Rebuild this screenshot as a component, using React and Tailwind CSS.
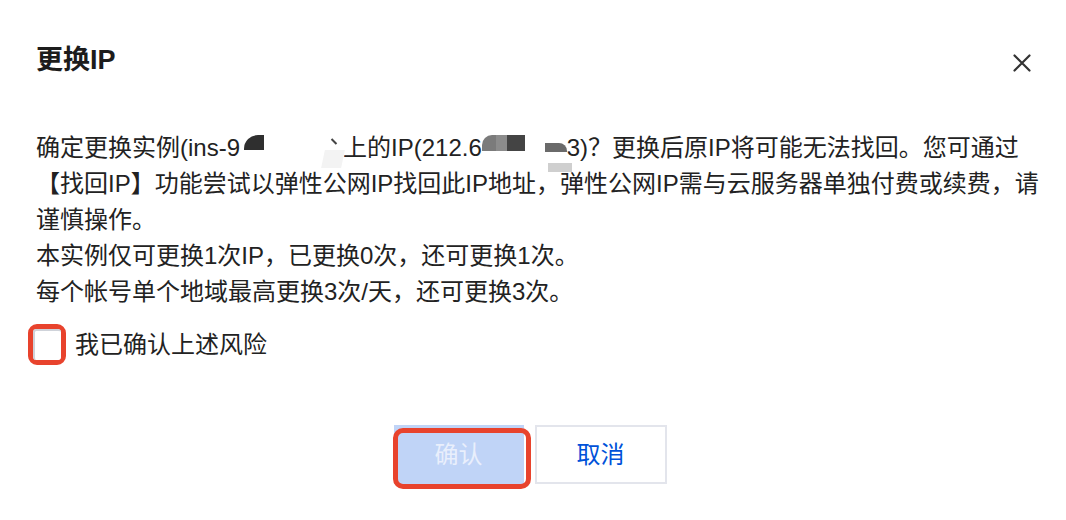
import { useState } from "react";

const font = {
  fontFamily: '"Liberation Sans", "Noto Sans CJK SC", sans-serif',
};

// redacted bits of the instance id / ip in the original screenshot
function Blot({ className }) {
  return <span className={`inline-block align-top ${className}`} />;
}

export default function App() {
  const [agreed, setAgreed] = useState(false);

  return (
    <div
      className="w-[1066px] h-[520px] bg-white flex flex-col pt-10 pl-[36px] pr-[35px] text-[#222]"
      style={font}
    >
      {/* HEADER */}
      <div className="flex items-center justify-between h-[40px]">
        <h1 className="text-[27px] font-bold leading-[40px] text-[#1c1c1c]">更换IP</h1>
        <button className="mt-[6px] w-[18px] h-[18px] flex items-center justify-center">
          <svg width="18" height="18" viewBox="0 0 18 18" fill="none">
            <path d="M1.5 1.5 16.5 16.5M16.5 1.5 1.5 16.5" stroke="#333" strokeWidth="2.2" strokeLinecap="round" />
          </svg>
        </button>
      </div>

      {/* BODY */}
      <div className="mt-[50px] text-[24px] leading-[36px] whitespace-nowrap">
        <div>
          确定更换实例(ins-9
          <Blot className="ml-[4px] w-[20px] h-[15px] mt-[5px] bg-[#2f2f2f] rounded-tl-[14px]" />
          <span className="inline-block w-[65px]" />
          <span className="relative inline-block w-[14px] h-[36px] align-top">
            <span className="absolute left-[-6px] top-[20px] w-[20px] h-[18px] bg-[#f3f3f3] -skew-x-12" />
            <span className="absolute left-[4px] top-[8px] w-[2px] h-[7px] bg-[#444] -rotate-45" />
          </span>
          上的IP(212.6
          <Blot className="w-[14px] h-[16px] mt-[5px] bg-[#7b7b7b] rounded-tl-[10px]" />
          <Blot className="w-[11px] h-[16px] mt-[5px] bg-[#8c8c8c]" />
          <Blot className="w-[18px] h-[16px] mt-[5px] bg-[#444]" />
          <span className="inline-block w-[20px]" />
          <Blot className="w-[22px] h-[9px] mt-[13px] bg-[#6a6a6a] rounded-tr-[8px]" />
          3)？更换后原IP将可能无法找回。您可通过
        </div>
        <div className="relative">
          <span className="absolute left-[512px] top-[-3px] w-[24px] h-[9px] bg-[#cfcfcf]" />
          【找回IP】功能尝试以弹性公网IP找回此IP地址，弹性公网IP需与云服务器单独付费或续费，请
        </div>
        <div>谨慎操作。</div>
        <div>本实例仅可更换1次IP，已更换0次，还可更换1次。</div>
        <div>每个帐号单个地域最高更换3次/天，还可更换3次。</div>
      </div>

      {/* CHECKBOX */}
      <label className="mt-[14px] ml-[-8px] flex items-center h-[41px] cursor-pointer">
        <span className="w-[38px] h-[41px] border-[5px] border-[#e8432d] rounded-[9px] flex">
          <input
            type="checkbox"
            checked={agreed}
            onChange={(e) => setAgreed(e.target.checked)}
            className="sr-only"
          />
          <span className="flex-1 bg-white border-t-2 border-l-2 border-[#cfd3da] rounded-[3px]" />
        </span>
        <span className="ml-[9px] text-[24px] leading-[36px]">我已确认上述风险</span>
      </label>

      {/* BUTTONS */}
      <div className="mt-[60px] flex justify-center gap-[11px] mr-[7px]">
        <div className="relative">
          <button
            disabled={!agreed}
            className={`w-[130px] h-[59px] text-[24px] ${
              agreed ? "bg-[#0052d9] text-white" : "bg-[#c0d4f7] text-[#e9effc] cursor-not-allowed"
            }`}
          >
            确认
          </button>
          <span className="absolute left-[-1px] top-[3px] w-[138px] h-[61px] border-[5px] border-[#e8432d] rounded-[10px] pointer-events-none" />
        </div>
        <button className="w-[132px] h-[59px] bg-white border-2 border-[#e3e5ec] text-[24px] text-[#0052d9]">
          取消
        </button>
      </div>
    </div>
  );
}
